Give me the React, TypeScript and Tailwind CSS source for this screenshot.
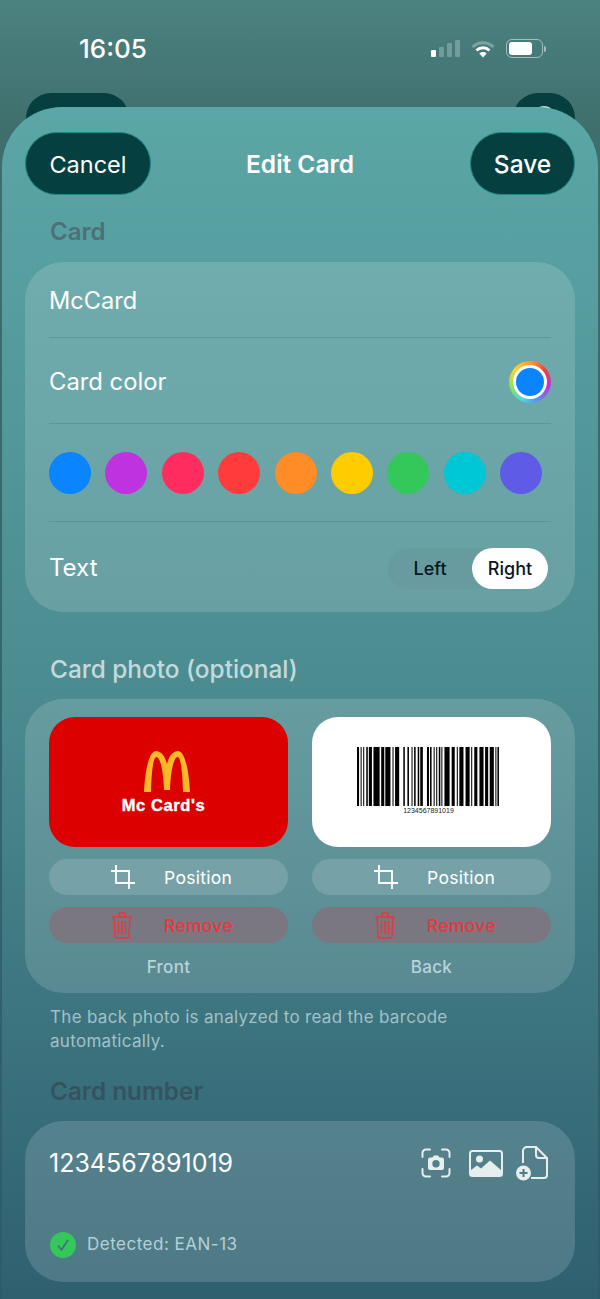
const swatches = ['bg-[#0a84ff]', 'bg-[#bf32e0]', 'bg-[#ff2d5f]', 'bg-[#ff3b3b]', 'bg-[#ff8c26]', 'bg-[#ffcc00]', 'bg-[#34c759]', 'bg-[#00c7d6]', 'bg-[#5e5ce6]'];

// widths of the bars / gaps, read off the reference
const bars = [2, 1.5, 1, 1.5, 1, 2, 1.5, 1, 3, 1.5, 6, 1.5, 3, 1, 5, 2, 1, 1.5, 4, 4, 1.5, 2.5, 1.5, 2.5, 1, 1.5, 1.5, 2, 1.5, 1, 2.5, 4, 2, 1, 1.5, 2, 1, 1.5, 1, 1.5, 1.5, 1, 1, 2, 5, 2, 3, 2, 1, 1.5, 4, 2, 4, 1.5, 1, 2, 3, 2, 4, 1.5, 3, 1.5, 4, 1.5, 1, 1, 1.5, 1];

const Barcode = () => {
    let x = 0;
    const rects = bars.map((w, i) => {
        const r = i % 2 === 0 ? <rect key={i} x={x} y={0} width={w} height={59} fill="#000" /> : null;
        x += w;
        return r;
    });
    return (
        <svg width="143" height="59" viewBox={`0 0 ${x} 59`} preserveAspectRatio="none">
            {rects}
        </svg>
    );
};

const Arches = () => (
    <svg width="46" height="41" viewBox="0 0 46 41">
        <path d="M0 41C1 20 5 0 12 0C17 0 21 5 23 13C25 5 29 0 34 0C41 0 45 20 46 41H39C38.500 22 37 6 33.500 6C30 6 26.500 20 26 39H20C19.500 20 16 6 12.500 6C9 6 7.500 22 7 41Z" fill="#fdb827" />
    </svg>
);

const CropIcon = () => (
    <svg width="24" height="24" viewBox="0 0 24 24" fill="none" stroke="#fff" strokeWidth="1.800">
        <path d="M5 0v18h19M0 6h18v18" />
    </svg>
);

const TrashIcon = () => (
    <svg width="22" height="27" viewBox="0 0 22 27" fill="none" stroke="#e5383f" strokeWidth="1.500">
        <path d="M1 5h20M8 5V2a1 1 0 0 1 1-1h4a1 1 0 0 1 1 1v3M3 5l1 19a2 2 0 0 0 2 2h10a2 2 0 0 0 2-2l1-19" />
        <path d="M7.500 9v13M11 9v13M14.500 9v13" />
    </svg>
);

const ScanCameraIcon = () => (
    <svg width="30" height="30" viewBox="0 0 30 30" fill="none">
        <path d="M1.500 9V5a3.500 3.500 0 0 1 3.500-3.500h4M21 1.500h4A3.500 3.500 0 0 1 28.500 5v4M28.500 21v4a3.500 3.500 0 0 1-3.500 3.500h-4M9 28.500H5A3.500 3.500 0 0 1 1.500 25v-4" stroke="#e6eeee" strokeWidth="2" strokeLinecap="round" />
        <path fillRule="evenodd" clipRule="evenodd" d="M9 9.500h2.500l1.300-2h4.400l1.300 2H21a2 2 0 0 1 2 2V20a2 2 0 0 1-2 2H9a2 2 0 0 1-2-2v-8.500a2 2 0 0 1 2-2Zm6 2.500a3.700 3.700 0 1 0 0 7.400 3.700 3.700 0 0 0 0-7.400Z" fill="#e6eeee" />
    </svg>
);

const ImageIcon = () => (
    <svg width="34" height="27" viewBox="0 0 34 27" fill="none">
        <rect x="1" y="1" width="32" height="25" rx="2.500" stroke="#e6eeee" strokeWidth="2" />
        <circle cx="10.500" cy="9" r="3.500" fill="#e6eeee" />
        <path d="M2 25v-5l6-4.500 4 3 9-8 11 9.500v5Z" fill="#e6eeee" />
    </svg>
);

const FilePlusIcon = () => (
    <svg width="33" height="36" viewBox="0 0 33 36" fill="none">
        <path d="M7 18V6a4 4 0 0 1 4-4h9l11 11v17a3 3 0 0 1-3 3H15" stroke="#e6eeee" strokeWidth="2" strokeLinejoin="round" />
        <path d="M20 2v8a3 3 0 0 0 3 3h8" stroke="#e6eeee" strokeWidth="2" />
        <circle cx="7.500" cy="28" r="7.500" fill="#e6eeee" />
        <path d="M7.500 24v8M3.500 28h8" stroke="#4e7b85" strokeWidth="2" />
    </svg>
);

const SignalIcon = () => (
    <div className="flex items-end gap-[3px] h-[17px]">
        <div className="w-[5px] h-[7px] rounded-[1px] bg-white" />
        <div className="w-[5px] h-[10px] rounded-[1px] bg-white/25" />
        <div className="w-[5px] h-[14px] rounded-[1px] bg-white/25" />
        <div className="w-[5px] h-[17px] rounded-[1px] bg-white/25" />
    </div>
);

const WifiIcon = () => (
    <svg width="24" height="18" viewBox="0 0 24 18" fill="none">
        <path d="M1.500 7a15 15 0 0 1 21 0" stroke="#fff" strokeOpacity="0.3" strokeWidth="3" />
        <path d="M5.500 10.500a9.300 9.300 0 0 1 13 0" stroke="#fff" strokeWidth="3" />
        <path d="M12 17.500 8.300 13.500a5.500 5.500 0 0 1 7.400 0Z" fill="#fff" />
    </svg>
);

const BatteryIcon = () => (
    <div className="flex items-center gap-[1px]">
        <div className="w-[37px] h-[19px] rounded-[6px] border border-white/50 p-[2px]">
            <div className="w-[23px] h-full rounded-[3px] bg-white" />
        </div>
        <div className="w-[2px] h-[6px] rounded-r-full bg-white/50" />
    </div>
);

const PhotoColumn = ({ label, children, photoClass }: { label: string; children: React.ReactNode; photoClass: string }) => (
    <div className="flex flex-col w-[239px]">
        <div className={`h-[130px] rounded-[26px] flex flex-col items-center ${photoClass}`}>
            {children}
        </div>
        <button className="mt-3 h-9 rounded-full bg-white/15 flex items-center text-white text-[17.5px] tracking-[0.3px]">
            <span className="ml-[62px] w-[24px] flex"><CropIcon /></span>
            <span className="ml-[29px] pt-[2px]">Position</span>
        </button>
        <button className="mt-3 h-9 rounded-full bg-[#7a7780] flex items-center text-[#e5383f] text-[17.5px] tracking-[0.3px]">
            <span className="ml-[62px] w-[22px] flex"><TrashIcon /></span>
            <span className="ml-[31px] pt-[2px] font-medium">Remove</span>
        </button>
        <div className="mt-[14px] h-[20px] leading-[20px] text-center text-[17px] font-medium text-[#b9d3d9] tracking-[0.3px]">{label}</div>
    </div>
);

const Divider = () => <div className="h-px bg-[#4c7f82]/40" />;

export default function App() {
    return (
        <div className="relative w-[600px] h-[1299px] overflow-hidden bg-gradient-to-b from-[#4b8280] via-[#3f6f6d] via-10% to-[#2d5c69] font-['Inter',sans-serif]">
            <div className="h-[107px] pl-[79px] pr-[54px] pt-[31px] flex justify-between items-start">
                <span className="text-white text-[26px] leading-[36px] font-medium">16:05</span>
                <div className="flex items-center gap-[11px] pt-[8px]">
                    <SignalIcon />
                    <WifiIcon />
                    <BatteryIcon />
                </div>
            </div>

            {/* the screen behind the sheet */}
            <div className="absolute left-[26px] top-[93px] w-[103px] h-[50px] rounded-[25px] bg-[#053f3f]" />
            <div className="absolute left-[513px] top-[93px] w-[62px] h-[50px] rounded-[25px] bg-[#053f3f] flex justify-center pt-[13px]">
                <div className="w-[22px] h-[22px] rounded-full bg-white/80" />
            </div>

            <div className="relative mx-[2px] h-[1192px] rounded-t-[60px] bg-gradient-to-b from-[#5ba6a6] via-[#4b8b90] to-[#2f6070] px-[23px] pt-[25px]">
                <div className="relative grid grid-cols-[1fr_auto_1fr] items-center h-[63px]">
                    <button className="justify-self-start w-[126px] h-[63px] pt-[2px] rounded-full bg-[#053f3f] border border-[#1b8a85] text-white text-[23.5px]">Cancel</button>
                    <span className="pt-[2px] text-white text-[24.5px] font-semibold">Edit Card</span>
                    <button className="justify-self-end w-[105px] h-[63px] pt-[2px] rounded-full bg-[#053f3f] border border-[#1b8a85] text-white text-[24.5px] font-medium">Save</button>
                </div>

                <h2 className="mt-[21px] pl-[25px] h-[32px] leading-[32px] text-[24px] font-semibold text-[#4d7078]">Card</h2>
                <div className="mt-[14px] h-[350px] rounded-[38px] bg-white/15 px-[24px] flex flex-col">
                    <div className="h-[75px] pt-[2px] flex items-center text-white text-[23.6px]">McCard</div>
                    <Divider />
                    <div className="h-[85px] pt-[2px] flex items-center justify-between text-white text-[23.8px]">
                        <span>Card color</span>
                        <div className="w-[42px] h-[42px] rounded-full bg-[conic-gradient(#ff9f2e,#f03f3f,#bf32e0,#5e8cf0,#4fd8e0,#8fe05a,#ffd62e,#ff9f2e)] flex items-center justify-center">
                            <div className="w-[34px] h-[34px] rounded-full bg-white flex items-center justify-center">
                                <div className="w-[28px] h-[28px] rounded-full bg-[#0a84ff]" />
                            </div>
                        </div>
                    </div>
                    <Divider />
                    <div className="h-[97px] flex items-center justify-between pr-[9px]">
                        {swatches.map((c) => (
                            <div key={c} className={`w-[42px] h-[42px] rounded-full ${c}`} />
                        ))}
                    </div>
                    <Divider />
                    <div className="flex-1 flex items-center justify-between pt-[2px]">
                        <span className="text-white text-[24px]">Text</span>
                        <div className="mr-[3px] w-[160px] h-[41px] rounded-full bg-[#648c90]/25 flex items-center justify-end text-[18px] font-medium">
                            <span className="w-[84px] text-center text-[#08181f]">Left</span>
                            <span className="w-[76px] h-[41px] rounded-full bg-white flex items-center justify-center text-[#08181f]">Right</span>
                        </div>
                    </div>
                </div>

                <h2 className="mt-[41px] pl-[25px] h-[32px] leading-[32px] text-[24.400px] font-medium text-[#c3dadd]">Card photo (optional)</h2>
                <div className="mt-[14px] h-[294px] rounded-[38px] bg-white/15 px-[24px] pt-[18px] flex justify-between">
                    <PhotoColumn label="Front" photoClass="bg-[#dc0000]">
                        <div className="mt-[34px] mr-[4px] flex"><Arches /></div>
                        <span className="mt-[3px] mr-[10px] text-white text-[16.500px] leading-[20px] font-bold font-['Liberation_Sans',sans-serif] tracking-[0.6px] [-webkit-text-stroke:0.4px_white]">Mc Card's</span>
                    </PhotoColumn>
                    <PhotoColumn label="Back" photoClass="bg-white">
                        <div className="mt-[30px] mr-[6px] flex"><Barcode /></div>
                        <span className="mr-[6px] text-[#222] text-[7px] leading-[10px] font-['Liberation_Sans',sans-serif]">1234567891019</span>
                    </PhotoColumn>
                </div>

                <p className="mt-[12px] px-[25px] text-[17px] leading-[24px] tracking-[0.3px] text-[#a3c1c6]">The back photo is analyzed to read the barcode automatically.</p>

                <h2 className="mt-[22px] pl-[25px] h-[32px] leading-[32px] text-[24.300px] font-semibold text-[#34535f]">Card number</h2>
                <div className="mt-[14px] h-[161px] rounded-[38px] bg-white/15 pl-[24px] pr-[26px] flex flex-col">
                    <div className="h-[84px] flex items-center justify-between">
                        <span className="pt-[2px] text-white text-[25px]">1234567891019</span>
                        <div className="flex items-center">
                            <ScanCameraIcon />
                            <div className="ml-[18px] flex"><ImageIcon /></div>
                            <div className="ml-[13px] flex"><FilePlusIcon /></div>
                        </div>
                    </div>
                    <div className="mt-[27px] flex items-center">
                        <div className="ml-[1px] w-[26px] h-[26px] rounded-full bg-[#34c759] flex items-center justify-center">
                            <svg width="14" height="14" viewBox="0 0 14 14" fill="none" stroke="#3f6d78" strokeWidth="1.500"><path d="M2 7.500 5.500 12 12 2" /></svg>
                        </div>
                        <span className="ml-[11px] text-[17px] tracking-[0.5px] text-[#b5d0d6]">Detected: EAN-13</span>
                    </div>
                </div>
            </div>
        </div>
    );
}
